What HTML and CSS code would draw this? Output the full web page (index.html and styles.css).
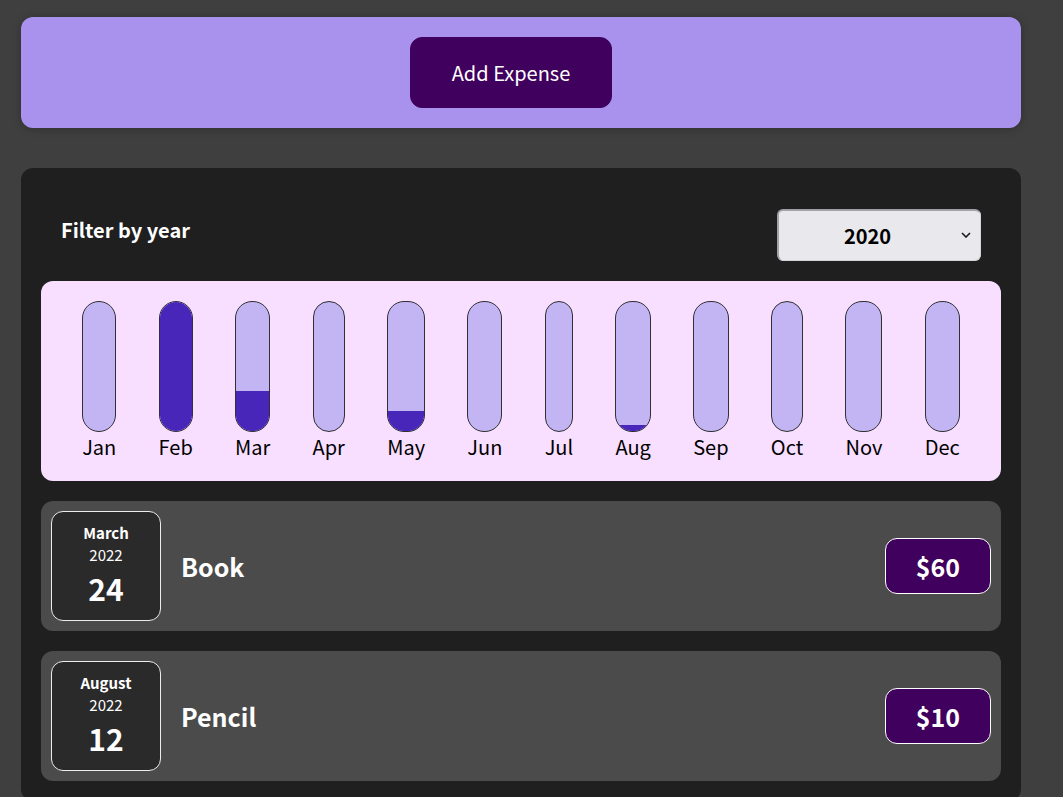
FILE: index.html
```html
<!DOCTYPE html>
<html lang="en">
<head>
<meta charset="utf-8">
<title>Expenses</title>
<link rel="stylesheet" href="styles.css">
</head>
<body>
  <div class="new-expense">
    <button class="add-btn" type="button">Add Expense</button>
  </div>

  <div class="expenses">
    <div class="filter">
      <div class="filter-control">
        <label for="year">Filter by year</label>
        <span class="select-wrap">
          <select id="year" class="year-select">
            <option>2020</option>
            <option>2021</option>
            <option>2022</option>
          </select>
          <svg class="chevron" width="10" height="6" viewBox="0 0 10 6"><path d="M1 1 L5 5 L9 1" fill="none" stroke="#1a1a1a" stroke-width="1.6"/></svg>
        </span>
      </div>
    </div>

    <div class="chart">
      <div class="bar"><div class="bar-inner"><div class="bar-fill" style="height:0%"></div></div><div class="bar-label">Jan</div></div>
      <div class="bar"><div class="bar-inner"><div class="bar-fill" style="height:100%"></div></div><div class="bar-label">Feb</div></div>
      <div class="bar"><div class="bar-inner"><div class="bar-fill" style="height:31%"></div></div><div class="bar-label">Mar</div></div>
      <div class="bar"><div class="bar-inner"><div class="bar-fill" style="height:0%"></div></div><div class="bar-label">Apr</div></div>
      <div class="bar"><div class="bar-inner"><div class="bar-fill" style="height:15.5%"></div></div><div class="bar-label">May</div></div>
      <div class="bar"><div class="bar-inner"><div class="bar-fill" style="height:0%"></div></div><div class="bar-label">Jun</div></div>
      <div class="bar"><div class="bar-inner"><div class="bar-fill" style="height:0%"></div></div><div class="bar-label">Jul</div></div>
      <div class="bar"><div class="bar-inner"><div class="bar-fill" style="height:5%"></div></div><div class="bar-label">Aug</div></div>
      <div class="bar"><div class="bar-inner"><div class="bar-fill" style="height:0%"></div></div><div class="bar-label">Sep</div></div>
      <div class="bar"><div class="bar-inner"><div class="bar-fill" style="height:0%"></div></div><div class="bar-label">Oct</div></div>
      <div class="bar"><div class="bar-inner"><div class="bar-fill" style="height:0%"></div></div><div class="bar-label">Nov</div></div>
      <div class="bar"><div class="bar-inner"><div class="bar-fill" style="height:0%"></div></div><div class="bar-label">Dec</div></div>
    </div>

    <ul class="expense-list">
      <li class="expense-item">
        <div class="expense-desc">
          <div class="date">
            <div class="date-month">March</div>
            <div class="date-year">2022</div>
            <div class="date-day">24</div>
          </div>
          <h2 class="expense-title">Book</h2>
        </div>
        <div class="price">$60</div>
      </li>
      <li class="expense-item">
        <div class="expense-desc">
          <div class="date">
            <div class="date-month">August</div>
            <div class="date-year">2022</div>
            <div class="date-day">12</div>
          </div>
          <h2 class="expense-title">Pencil</h2>
        </div>
        <div class="price">$10</div>
      </li>
    </ul>
  </div>
</body>
</html>
```

FILE: styles.css
```css
* { box-sizing: border-box; }

html, body {
  margin: 0;
  padding: 0;
}

body {
  background-color: #3f3f3f;
  font-family: "Noto Sans CJK JP", "Noto Sans", sans-serif;
  padding-top: 17px;
  padding-left: 21px;
  overflow: hidden;
}

.new-expense {
  width: 1000px;
  background-color: #a892ee;
  padding: 20px;
  border-radius: 12px;
  text-align: center;
  box-shadow: 0 1px 8px rgba(0, 0, 0, 0.25);
}

.add-btn {
  font-family: inherit;
  font-size: 20px;
  line-height: 29px;
  padding: 20px 41px;
  border: 1px solid #40005d;
  background-color: #40005d;
  color: #ffffff;
  border-radius: 12px;
  margin-right: 20px;
  cursor: pointer;
}

.expenses {
  width: 1000px;
  margin-top: 40px;
  background-color: #1f1f1f;
  padding: 20px;
  border-radius: 12px;
}

.filter {
  color: #ffffff;
  padding: 0 20px;
}

.filter-control {
  display: flex;
  align-items: center;
  justify-content: space-between;
  margin: 21px 0 20px;
}

.filter-control label {
  font-weight: bold;
  font-size: 20px;
  line-height: 29px;
  margin-bottom: 12px;
}

.select-wrap {
  position: relative;
  display: block;
}

.year-select {
  appearance: none;
  -webkit-appearance: none;
  display: block;
  width: 204px;
  height: 52px;
  font-family: inherit;
  font-size: 20px;
  font-weight: bold;
  color: #000000;
  background-color: #e9e9ed;
  border-top: 2px solid #a2a2a6;
  border-left: 2px solid #a2a2a6;
  border-right: 1px solid #d4d4d8;
  border-bottom: 1px solid #d4d4d8;
  border-radius: 6px;
  padding: 0 24px 0 0;
  text-align: center;
  text-align-last: center;
}

.chevron {
  position: absolute;
  right: 10px;
  top: 23px;
  pointer-events: none;
}

.chart {
  display: flex;
  justify-content: space-around;
  height: 200px;
  padding: 20px;
  border-radius: 12px;
  background-color: #f8dfff;
  text-align: center;
}

.bar {
  height: 100%;
  display: flex;
  flex-direction: column;
  align-items: center;
}

.bar-inner {
  flex: 1;
  width: 100%;
  border: 1px solid #313131;
  border-radius: 17px;
  background-color: #c3b4f3;
  overflow: hidden;
  display: flex;
  flex-direction: column;
  justify-content: flex-end;
}

.bar-fill {
  width: 100%;
  background-color: #4826b9;
}

.bar-label {
  font-size: 20px;
  line-height: 29px;
  color: #000000;
}

.expense-list {
  list-style: none;
  margin: 0;
  padding: 0;
}

.expense-item {
  display: flex;
  justify-content: space-between;
  align-items: center;
  padding: 10px;
  margin-top: 20px;
  border-radius: 12px;
  background-color: #4b4b4b;
}

.expense-desc {
  display: flex;
  align-items: center;
  gap: 20px;
  flex: 1;
}

.date {
  width: 110px;
  height: 110px;
  display: flex;
  flex-direction: column;
  align-items: center;
  justify-content: center;
  padding-bottom: 3px;
  border: 1px solid #ececec;
  border-radius: 12px;
  background-color: #2a2a2a;
  color: #ffffff;
}

.date-month {
  font-size: 15px;
  font-weight: bold;
  line-height: 22px;
}

.date-year {
  font-size: 15px;
  line-height: 22px;
}

.date-day {
  font-size: 30px;
  font-weight: bold;
  line-height: 38px;
  margin-top: 3px;
}

.expense-title {
  margin: 0;
  color: #ffffff;
  font-size: 25px;
  font-weight: bold;
}

.price {
  height: 56px;
  display: flex;
  align-items: center;
  padding: 0 30px;
  font-size: 25px;
  font-weight: bold;
  color: #ffffff;
  background-color: #40005d;
  border: 1px solid #ffffff;
  border-radius: 12px;
}
```
